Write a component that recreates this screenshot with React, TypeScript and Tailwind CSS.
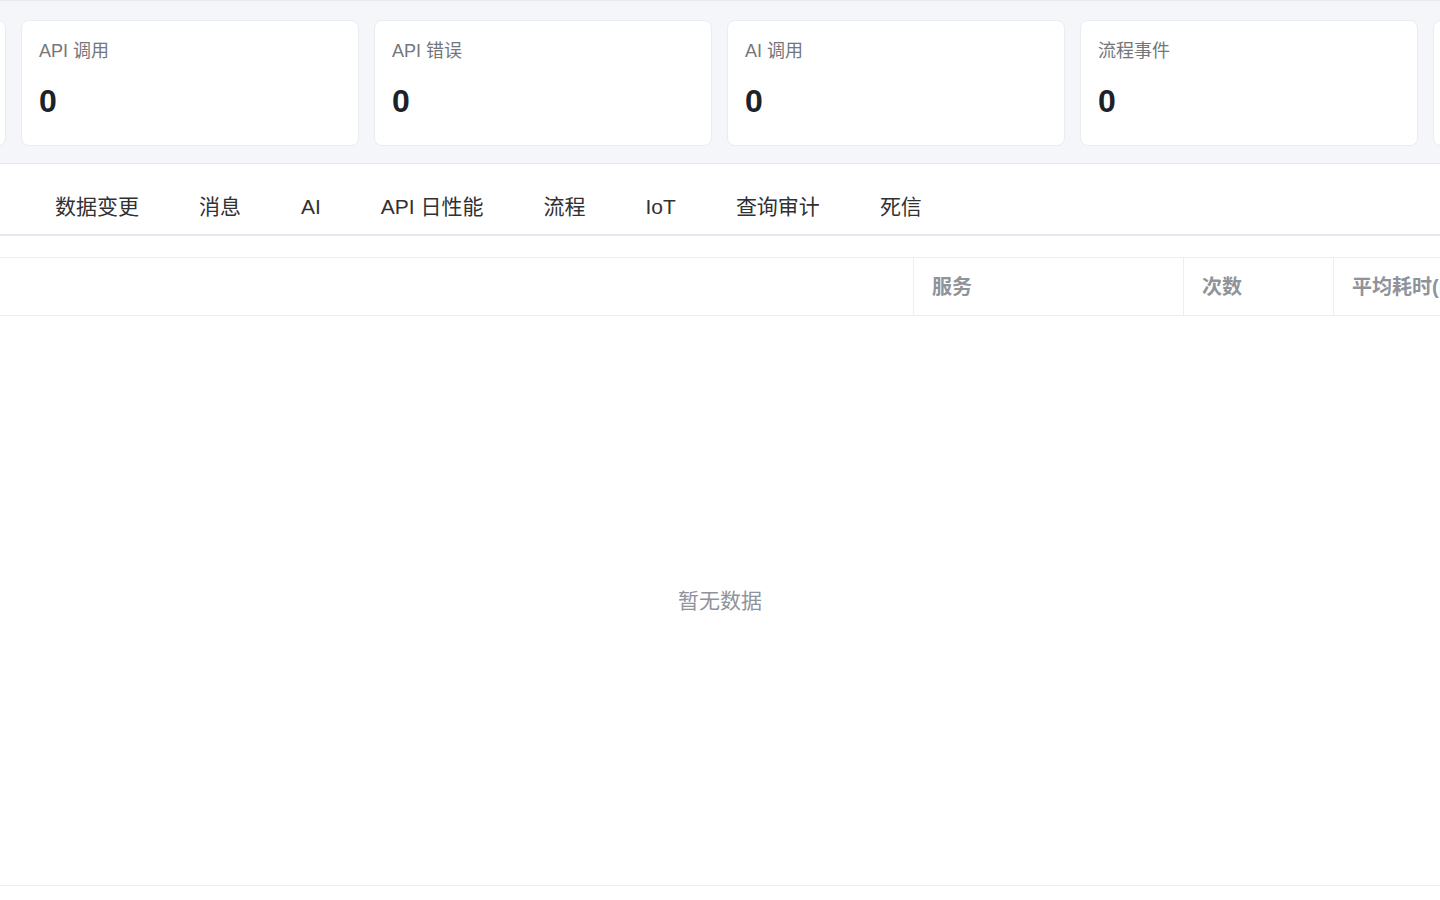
import React from "react";

const cards = [
  { label: "请求总数", value: "0" },
  { label: "API 调用", value: "0" },
  { label: "API 错误", value: "0" },
  { label: "AI 调用", value: "0" },
  { label: "流程事件", value: "0" },
  { label: "IoT 消息", value: "0" },
];

const tabs = ["数据变更", "消息", "AI", "API 日性能", "流程", "IoT", "查询审计", "死信"];

export default function App() {
  return (
    <div
      className="w-[1440px] h-[900px] overflow-hidden bg-white"
      style={{ fontFamily: '"Liberation Sans", "Noto Sans CJK SC", sans-serif' }}
    >
      <div className="h-[164px] bg-[#f4f6f9] border-t border-[#e6e9ee] border-b border-b-[#e3e6eb] overflow-hidden">
        <div className="flex gap-[15px] ml-[-332px] pt-[19px]">
          {cards.map((c, i) => (
            <div
              key={i}
              className="shrink-0 w-[338px] h-[126px] bg-white rounded-[8px] border border-[#e9ecf1] px-[17px] pt-[18px]"
            >
              <div className="text-[18px] leading-[25px] text-[#73767a]">{c.label}</div>
              <div className="mt-[18px] text-[32px] leading-[38px] font-bold text-[#1d2129]">{c.value}</div>
            </div>
          ))}
        </div>
      </div>
      <div className="h-[72px] border-b-2 border-[#e4e7ed] flex items-center gap-[60px] pl-[55px] pt-[15px] text-[21px] text-[#303133]">
        {tabs.map((t) => (
          <span key={t} className="whitespace-nowrap leading-[28px]">
            {t}
          </span>
        ))}
      </div>
      <div className="mt-[21px] border-t border-b border-[#ebeef5] h-[629px] flex flex-col">
        <div className="h-[58px] flex border-b border-[#ebeef5] shrink-0 text-[20px] font-bold text-[#909399]">
          <div className="w-[914px] shrink-0 border-r border-[#ebeef5]" />
          <div className="w-[270px] shrink-0 border-r border-[#ebeef5] flex items-center pl-[18px]">服务</div>
          <div className="w-[150px] shrink-0 border-r border-[#ebeef5] flex items-center pl-[18px]">次数</div>
          <div className="w-[200px] shrink-0 flex items-center pl-[18px] whitespace-nowrap">平均耗时(ms)</div>
        </div>
        <div className="flex-1 flex items-center justify-center text-[21px] text-[#909399]">暂无数据</div>
      </div>
    </div>
  );
}
